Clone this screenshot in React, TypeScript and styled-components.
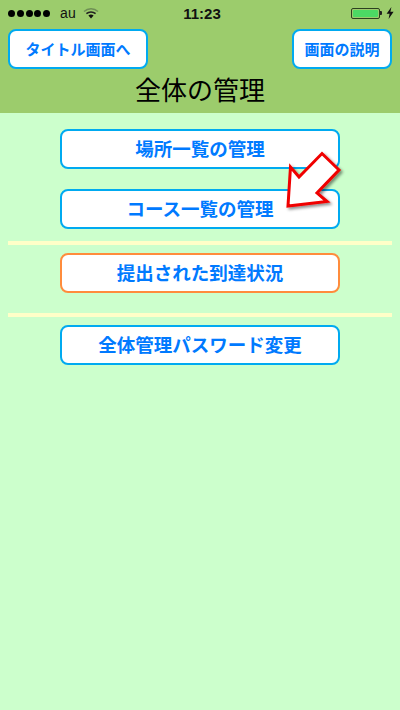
import React from 'react';
import styled, { createGlobalStyle } from 'styled-components';

const JP = `"Noto Sans CJK JP", "Liberation Sans", sans-serif`;

const App = () => {
  return (
    <Screen>
      <GlobalStyle />
      <Header>
        <StatusBar>
          <Carrier>
            <Dots>
              {[0, 1, 2, 3, 4].map((id) => (
                <Dot key={id} />
              ))}
            </Dots>
            <CarrierName>au</CarrierName>
            <svg width="16" height="12" viewBox="0 0 16 12">
              <path d="M1 4.5C5 .8 11 .8 15 4.5" fill="none" stroke="#6f8f55" strokeWidth="1.5" />
              <path d="M3.4 6.6C6 4.3 10 4.3 12.6 6.6" fill="none" stroke="#222" strokeWidth="1.5" />
              <path d="M5.4 8.6C7 7.2 9 7.2 10.6 8.6L8 11.4Z" fill="#111" />
            </svg>
          </Carrier>
          <Clock>11:23</Clock>
          <BatteryArea>
            <Battery>
              <BatteryFill />
            </Battery>
            <BatteryTip />
            <svg width="8" height="12" viewBox="0 0 8 12">
              <path d="M5.4 0L0.6 6.8H3.6L2.6 12L7.6 4.8H4.4Z" fill="#111" />
            </svg>
          </BatteryArea>
        </StatusBar>
        <NavRow>
          <NavButton $width={140}>タイトル画面へ</NavButton>
          <NavButton $width={100}>画面の説明</NavButton>
        </NavRow>
        <Title>全体の管理</Title>
      </Header>
      <Body>
        <MenuButton>場所一覧の管理</MenuButton>
        <MenuButton $gap={20}>コース一覧の管理</MenuButton>
        <Separator $top={12} />
        <MenuButton $gap={8} $accent>
          提出された到達状況
        </MenuButton>
        <Separator $top={20} />
        <MenuButton $gap={8}>全体管理パスワード変更</MenuButton>
        <Pointer width="60" height="62" viewBox="284 150 60 62">
          <defs>
            <filter id="arrow-shadow" x="-20%" y="-20%" width="150%" height="150%">
              <feDropShadow dx="2" dy="2" stdDeviation="1.6" floodColor="#000" floodOpacity="0.45" />
            </filter>
          </defs>
          <polygon
            points="288,206 290.5,167 299,177 322,153.5 339,170 317,193 327,201.5"
            fill="#fff"
            stroke="#f00000"
            strokeWidth="3"
            strokeLinejoin="miter"
            filter="url(#arrow-shadow)"
          />
        </Pointer>
      </Body>
    </Screen>
  );
};

export default App;

const GlobalStyle = createGlobalStyle`
  html, body {
    margin: 0;
    padding: 0;
    background: #ccffcc;
  }
`;

const Screen = styled.div`
  width: 400px;
  height: 710px;
  overflow: hidden;
  display: flex;
  flex-direction: column;
  font-family: ${JP};
`;

const Header = styled.header`
  height: 113px;
  flex: none;
  background: #9ccc6c;
  display: flex;
  flex-direction: column;
`;

const StatusBar = styled.div`
  height: 29px;
  padding: 0 6px 3px 8px;
  display: grid;
  grid-template-columns: 1fr auto 1fr;
  align-items: center;
  box-sizing: border-box;
`;

const Carrier = styled.div`
  display: flex;
  align-items: center;
`;

const Dots = styled.div`
  display: flex;
  gap: 1.75px;
`;

const Dot = styled.span`
  width: 7px;
  height: 7px;
  border-radius: 50%;
  background: #000;
`;

const CarrierName = styled.span`
  margin: 0 7px 0 10px;
  font: 14px 'Liberation Sans', sans-serif;
  letter-spacing: 0.3px;
  color: #111;
`;

const Clock = styled.span`
  margin-left: 2px;
  font: 700 15px 'Liberation Sans', sans-serif;
  color: #111;
`;

const BatteryArea = styled.div`
  display: flex;
  align-items: center;
  justify-content: flex-end;
`;

const Battery = styled.div`
  width: 25px;
  height: 7px;
  box-sizing: content-box;
  border: 1px solid #2c4020;
  border-radius: 2px;
  padding: 1px;
`;

const BatteryFill = styled.div`
  width: 100%;
  height: 100%;
  background: #4cd964;
  border-radius: 1px;
`;

const BatteryTip = styled.span`
  width: 2px;
  height: 4px;
  margin-right: 4px;
  background: #222;
  border-radius: 0 1px 1px 0;
`;

const NavRow = styled.div`
  display: flex;
  justify-content: space-between;
  padding: 0 8px;
`;

const NavButton = styled.button<{ $width: number }>`
  width: ${({ $width }) => $width}px;
  height: 40px;
  padding: 0 0 2px;
  box-sizing: border-box;
  background: #fff;
  border: 2px solid #00aaf0;
  border-radius: 8px;
  color: #007aff;
  font: 700 15px ${JP};
`;

const Title = styled.h1`
  margin: 2px 0 0;
  height: 36px;
  text-align: center;
  font: 400 26px/36px ${JP};
  color: #000;
`;

const Body = styled.main`
  position: relative;
  flex: 1;
  background: #ccffcc;
  padding-top: 16px;
  display: flex;
  flex-direction: column;
  align-items: center;
`;

const MenuButton = styled.button<{ $gap?: number; $accent?: boolean }>`
  width: 280px;
  height: 40px;
  flex: none;
  margin-top: ${({ $gap = 0 }) => $gap}px;
  padding: 0 0 3px;
  box-sizing: border-box;
  background: #fff;
  border: 2px solid ${({ $accent }) => ($accent ? '#ff8c3c' : '#00aaf0')};
  border-radius: 8px;
  color: #007aff;
  font: 700 18.5px ${JP};
`;

const Separator = styled.div<{ $top: number }>`
  width: 384px;
  height: 4px;
  flex: none;
  margin-top: ${({ $top }) => $top}px;
  background: #ffffc8;
`;

const Pointer = styled.svg`
  position: absolute;
  left: 284px;
  top: 37px;
  overflow: visible;
`;
